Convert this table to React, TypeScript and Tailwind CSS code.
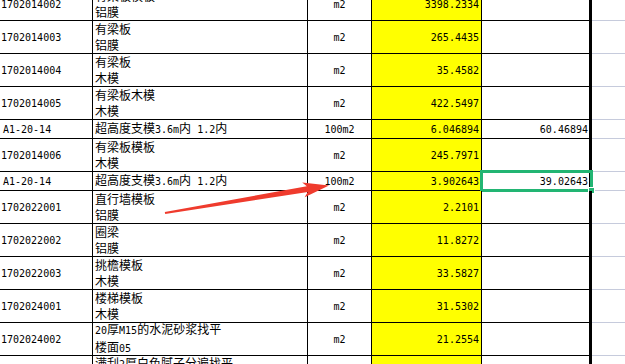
import React from "react";

type Row = {
  a: string;
  b: string[];
  c: string;
  d: string;
  e?: string;
  short?: boolean;
  selected?: boolean;
};

const rows: Row[] = [
  { a: "1702014002", b: ["有梁板模板", "铝膜"], c: "m2", d: "3398.2334" },
  { a: "1702014003", b: ["有梁板", "铝膜"], c: "m2", d: "265.4435" },
  { a: "1702014004", b: ["有梁板", "木模"], c: "m2", d: "35.4582" },
  { a: "1702014005", b: ["有梁板木模", "木模"], c: "m2", d: "422.5497" },
  { a: "A1-20-14", b: ["超高度支模3.6m内 1.2内"], c: "100m2", d: "6.046894", e: "60.46894", short: true },
  { a: "1702014006", b: ["有梁板模板", "木模"], c: "m2", d: "245.7971" },
  { a: "A1-20-14", b: ["超高度支模3.6m内 1.2内"], c: "100m2", d: "3.902643", e: "39.02643", short: true, selected: true },
  { a: "1702022001", b: ["直行墙模板", "铝膜"], c: "m2", d: "2.2101" },
  { a: "1702022002", b: ["圈梁", "铝膜"], c: "m2", d: "11.8272" },
  { a: "1702022003", b: ["挑檐模板", "木模"], c: "m2", d: "33.5827" },
  { a: "1702024001", b: ["楼梯模板", "木模"], c: "m2", d: "31.5302" },
  { a: "1702024002", b: ["20厚M15的水泥砂浆找平", "楼面05"], c: "m2", d: "21.2554" },
  { a: "", b: ["满刮2厚白色腻子分遍找平", "墙面"], c: "", d: "" },
];

// ascii runs get the narrow mono face, like the half-width glyphs in the sheet
function Txt({ s }: { s: string }) {
  const parts = s.split(/([\x20-\x7e]+)/).filter(Boolean);
  return (
    <>
      {parts.map((p, i) =>
        /^[\x20-\x7e]+$/.test(p) ? (
          <span key={i} className="font-['DejaVu_Sans_Mono',monospace] text-[10px] whitespace-pre">
            {p}
          </span>
        ) : (
          <span key={i}>{p}</span>
        )
      )}
    </>
  );
}

const mono = "font-['DejaVu_Sans_Mono',monospace] text-[10px]";

export default function App() {
  return (
    <div className="relative w-[625px] h-[364px] overflow-hidden bg-white text-black font-['Noto_Sans_CJK_SC','Noto_Sans',sans-serif] text-[12px]">
      <div className="-mt-[12px]">
        {rows.map((r, i) => (
          <div key={i} className={`relative flex ${r.short ? "h-[19px]" : "h-[33px]"}`}>
            <div
              className={`w-[93px] shrink-0 flex items-center border-b border-r border-black ${mono} ${
                r.a.startsWith("A") ? "pl-[3px]" : "pl-[1px]"
              }`}
            >
              {r.a}
            </div>
            <div className="w-[215px] shrink-0 flex flex-col justify-center pl-[2px] leading-[16px] border-b border-r border-black whitespace-nowrap">
              {r.b.map((line, j) => (
                <div key={j}>
                  <Txt s={line} />
                </div>
              ))}
            </div>
            <div className={`w-[64px] shrink-0 flex items-center justify-center border-b border-r border-black ${mono}`}>
              {r.c}
            </div>
            <div className={`w-[110px] shrink-0 flex items-center justify-end pr-[2px] bg-[#ffff00] border-b border-r border-black ${mono}`}>
              {r.d}
            </div>
            <div className={`w-[110px] shrink-0 flex items-center justify-end pr-[1px] border-b border-r-[3px] border-black ${mono}`}>
              {r.e}
            </div>
            <div className="flex-1 border-b border-[#c6cbdc]" />

            {r.selected && (
              <>
                <div className="absolute left-[480px] top-[-2px] w-[113px] h-[22px] border-[3px] border-[#22b573]" />
                <div className="absolute left-[588px] top-[15px] w-[7px] h-[7px] bg-[#22b573] border border-white" />
              </>
            )}
          </div>
        ))}
      </div>

      <svg className="absolute inset-0 pointer-events-none" width="625" height="364" viewBox="0 0 625 364">
        <polygon
          points="164.8,212 306.8,186.3 302.2,182.4 329,185.5 304.6,197.2 307.8,191.9 165.2,214"
          fill="#ef3b2d"
        />
      </svg>
    </div>
  );
}
